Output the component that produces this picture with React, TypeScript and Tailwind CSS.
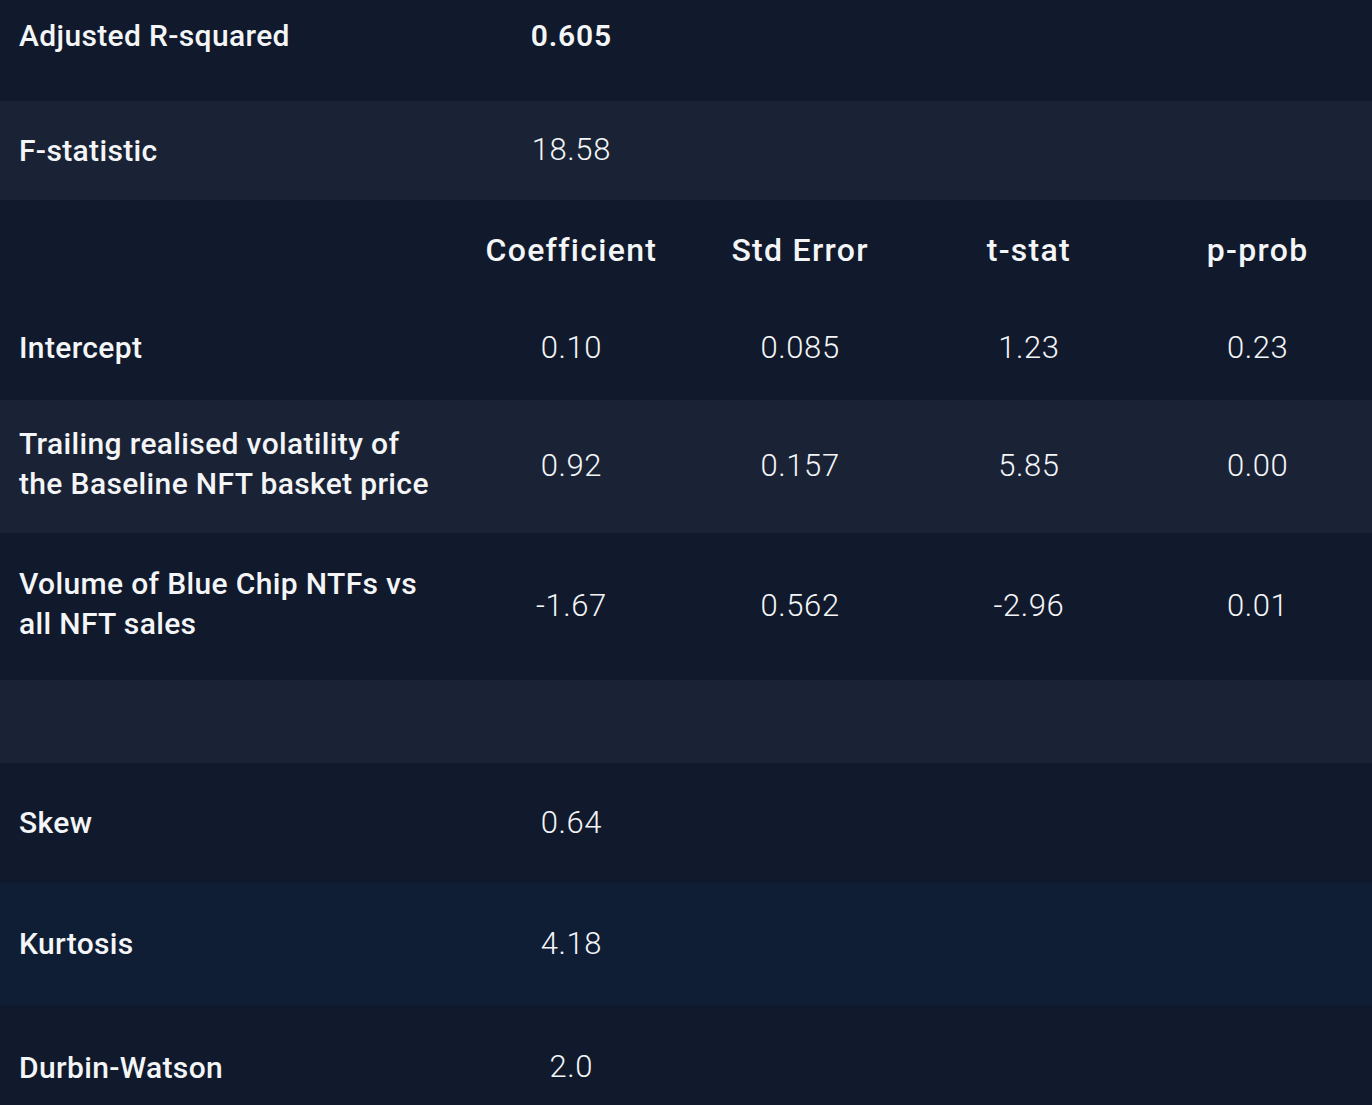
import React from "react";

type Row = {
  label?: string[];
  values: string[];
  h: string;
  bg: string;
  header?: boolean;
  boldValue?: boolean;
  align?: string;
};

const rows: Row[] = [
  { label: ["Adjusted R-squared"], values: ["0.605"], h: "h-[101px]", bg: "bg-[#111a2c]", boldValue: true, align: "pb-[30px]" },
  { label: ["F-statistic"], values: ["18.58"], h: "h-[99px]", bg: "bg-[#1a2335]" },
  { values: ["Coefficient", "Std Error", "t-stat", "p-prob"], h: "h-[100px]", bg: "bg-[#111a2c]", header: true },
  { label: ["Intercept"], values: ["0.10", "0.085", "1.23", "0.23"], h: "h-[100px]", bg: "bg-[#111a2c]", align: "pb-[4px]" },
  { label: ["Trailing realised volatility of", "the Baseline NFT basket price"], values: ["0.92", "0.157", "5.85", "0.00"], h: "h-[133px]", bg: "bg-[#1a2335]" },
  { label: ["Volume of Blue Chip NTFs vs", "all NFT sales"], values: ["-1.67", "0.562", "-2.96", "0.01"], h: "h-[147px]", bg: "bg-[#111a2c]" },
  { values: [], h: "h-[83px]", bg: "bg-[#1a2335]" },
  { label: ["Skew"], values: ["0.64"], h: "h-[120px]", bg: "bg-[#111a2c]" },
  { label: ["Kurtosis"], values: ["4.18"], h: "h-[122px]", bg: "bg-[#0f1d35]" },
  { label: ["Durbin-Watson"], values: ["2.0"], h: "h-[125px]", bg: "bg-[#111a2c]" },
];

export default function App() {
  return (
    <div
      className="w-[1372px] h-[1105px] overflow-hidden bg-[#111a2c] text-[#f4f5f7]"
      style={{ fontFamily: "Roboto, 'Liberation Sans', sans-serif" }}
    >
      {rows.map((r, i) => (
        <div
          key={i}
          className={`grid grid-cols-[457px_1fr_1fr_1fr_1fr] items-center ${r.h} ${r.bg} ${r.align ?? ""}`}
        >
          <div
            className={`pl-[19px] text-[30px] font-medium leading-[40px] tracking-[0.35px] ${
              r.label && r.label.length > 1 ? "pb-[5px]" : ""
            }`}
          >
            {r.label?.map((l, j) => (
              <div key={j}>{l}</div>
            ))}
          </div>
          {r.values.map((v, j) => (
            <div
              key={j}
              className={`text-center ${
                r.header
                  ? "text-[32px] font-medium tracking-[1.3px]"
                  : r.boldValue
                  ? "text-[30px] font-semibold tracking-[0.8px]"
                  : "text-[31px] font-light tracking-[0.6px]"
              }`}
            >
              {v}
            </div>
          ))}
        </div>
      ))}
    </div>
  );
}
